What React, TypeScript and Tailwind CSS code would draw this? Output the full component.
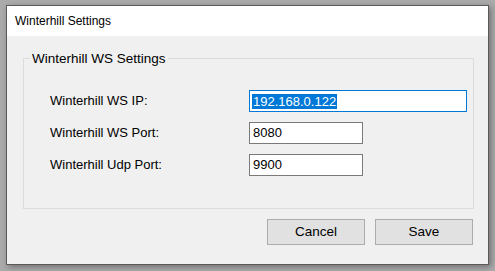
import React from 'react';

const font = { fontFamily: '"Liberation Sans", Arial, sans-serif' };

function Row({ label, children }: { label: string; children: React.ReactNode }) {
  return (
    <div className="flex items-center h-[22px]">
      <div className="w-[199px] text-[13px] text-black">{label}</div>
      {children}
    </div>
  );
}

export default function App() {
  return (
    <div className="w-[495px] h-[271px] bg-[#ababab] pl-[6px] pt-[5px]" style={font}>
      <div className="w-[483px] h-[260px] border border-[#5a5a5a] bg-[#f0f0f0] flex flex-col shadow-[2px_2px_6px_rgba(0,0,0,0.35)]">
        {/* title bar */}
        <div className="h-[30px] bg-white flex items-center pl-[8px] text-[12px] text-black">
          Winterhill Settings
        </div>

        <div className="flex-1 pl-[16px] pr-[14px] pt-[14px] flex flex-col">
          <fieldset className="border border-[#dcdcdc] h-[159px] pt-[23px] m-0">
            <legend className="ml-[6px] px-[2px] text-[13.5px] leading-[17px] text-black">
              Winterhill WS Settings
            </legend>
            <div className="flex flex-col gap-[10px] pl-[26px]">
              <Row label="Winterhill WS IP:">
                <div className="w-[218px] h-[22px] bg-white border border-[#0078d7] flex items-center pl-[2px]">
                  <span className="bg-[#0078d7] text-white text-[13px] leading-[15px] px-[1px]">192.168.0.122</span>
                </div>
              </Row>
              <Row label="Winterhill WS Port:">
                <div className="w-[114px] h-[22px] bg-white border border-[#7a7a7a] flex items-center pl-[3px] text-[13px] text-black">
                  8080
                </div>
              </Row>
              <Row label="Winterhill Udp Port:">
                <div className="w-[114px] h-[22px] bg-white border border-[#7a7a7a] flex items-center pl-[3px] text-[13px] text-black">
                  9900
                </div>
              </Row>
            </div>
          </fieldset>

          <div className="flex justify-end gap-[10px] mt-[10px] pr-[1px]">
            <button className="w-[98px] h-[26px] bg-[#e1e1e1] border border-[#adadad] text-[13.5px] text-black">
              Cancel
            </button>
            <button className="w-[98px] h-[26px] bg-[#e1e1e1] border border-[#adadad] text-[13.5px] text-black">
              Save
            </button>
          </div>
        </div>
      </div>
    </div>
  );
}
